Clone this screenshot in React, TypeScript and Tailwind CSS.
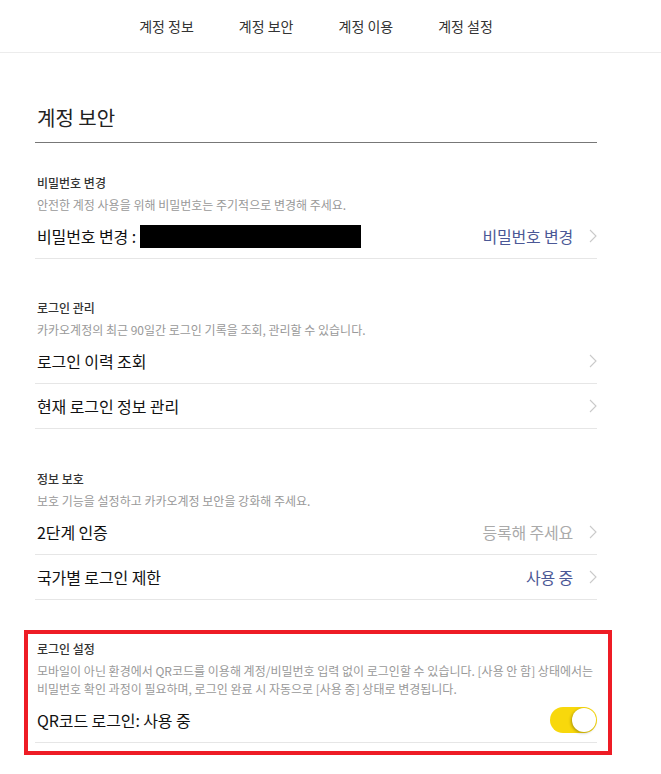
import React from "react";

const Chevron = () => (
  <svg width="8" height="14" viewBox="0 0 8 14" fill="none" className="ml-[16px] shrink-0">
    <path d="M1 1l6 6-6 6" stroke="#cacaca" strokeWidth="1.1" />
  </svg>
);

type RowProps = { title: React.ReactNode; right?: React.ReactNode; rightClass?: string; extra?: React.ReactNode };

const Row = ({ title, right, rightClass, extra }: RowProps) => (
  <div className="h-[45px] flex items-center border-b border-[#e6e6e6]">
    <div className="flex-1 flex items-center pl-[2px] text-[16px] text-[#111] tracking-[-0.1px]">{title}</div>
    {right && <span className={`text-[16px] tracking-[-0.2px] ${rightClass}`}>{right}</span>}
    {extra}
    {!extra && <Chevron />}
  </div>
);

const SectionHead = ({ label, desc }: { label: string; desc: React.ReactNode }) => (
  <div className="pl-[2px]">
    <div className="text-[12px] leading-[18px] font-medium text-[#333]">{label}</div>
    <div className="mt-[4px] text-[12px] leading-[18px] text-[#999]">{desc}</div>
  </div>
);

export default function App() {
  return (
    <div className="min-h-[774px] bg-white" style={{ fontFamily: '"Noto Sans CJK KR", "Noto Sans", sans-serif' }}>
      <div className="h-[53px] border-b border-[#ececec]">
        <nav className="ml-[35px] w-[562px] h-full flex items-center justify-center gap-[45px] text-[14px] text-[#333]">
          <span>계정 정보</span>
          <span>계정 보안</span>
          <span>계정 이용</span>
          <span>계정 설정</span>
        </nav>
      </div>
      <main className="ml-[35px] w-[562px]">
        <h1 className="pt-[51px] pb-[10px] pl-[2px] text-[20px] leading-[28px] text-[#222] border-b border-[#777]">계정 보안</h1>

        <section className="mt-[31px]">
          <SectionHead label="비밀번호 변경" desc="안전한 계정 사용을 위해 비밀번호는 주기적으로 변경해 주세요." />
          <Row
            title={<><span>비밀번호 변경 :</span><span className="ml-[4px] inline-block w-[221px] h-[23px] bg-black" /></>}
            right="비밀번호 변경"
            rightClass="text-[#4b5896]"
          />
        </section>

        <section className="mt-[40px]">
          <SectionHead label="로그인 관리" desc="카카오계정의 최근 90일간 로그인 기록을 조회, 관리할 수 있습니다." />
          <Row title="로그인 이력 조회" />
          <Row title="현재 로그인 정보 관리" />
        </section>

        <section className="mt-[41px]">
          <SectionHead label="정보 보호" desc="보호 기능을 설정하고 카카오계정 보안을 강화해 주세요." />
          <Row title="2단계 인증" right="등록해 주세요" rightClass="text-[#aaa]" />
          <Row title="국가별 로그인 제한" right="사용 중" rightClass="text-[#4b5896]" />
        </section>

        <section className="mt-[30px] -ml-[11px] -mr-[15px] border-4 border-[#ee1c25] pl-[7px] pr-[11px] pt-[6px] pb-[8px]">
          <SectionHead
            label="로그인 설정"
            desc={<>모바일이 아닌 환경에서 QR코드를 이용해 계정/비밀번호 입력 없이 로그인할 수 있습니다. [사용 안 함] 상태에서는 비밀번호 확인 과정이 필요하며, 로그인 완료 시 자동으로 [사용 중] 상태로 변경됩니다.</>}
          />
          <Row
            title="QR코드 로그인: 사용 중"
            extra={
              <div className="relative w-[47px] h-[26px] rounded-full bg-[#f8d80c] shrink-0">
                <div className="absolute right-[1px] top-[1px] w-[24px] h-[24px] rounded-full bg-white shadow-[-1px_1px_3px_rgba(0,0,0,0.3)]" />
              </div>
            }
          />
        </section>
      </main>
    </div>
  );
}
